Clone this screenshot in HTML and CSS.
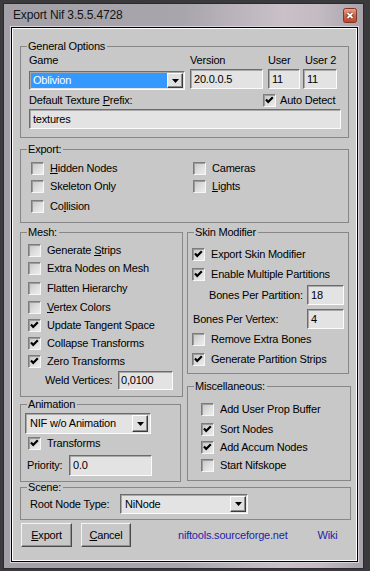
FILE: index.html
```html
<!DOCTYPE html>
<html>
<head>
<meta charset="utf-8">
<title>Export Nif</title>
<link rel="stylesheet" href="styles.css">
</head>
<body>
<div class="window">
  <div class="titlebar">
    <span class="title">Export Nif 3.5.5.4728</span>
    <span class="close">
      <svg width="14" height="15" viewBox="0 0 14 15">
        <defs>
          <linearGradient id="cg" x1="0" y1="0" x2="0" y2="1">
            <stop offset="0" stop-color="#eba590"/>
            <stop offset="0.5" stop-color="#d2644c"/>
            <stop offset="1" stop-color="#b9452f"/>
          </linearGradient>
        </defs>
        <rect x="0.5" y="0.5" width="13" height="14" rx="2" fill="url(#cg)" stroke="#84361f"/>
        <path d="M4.5 5 L9.5 10 M9.5 5 L4.5 10" stroke="#6a2a1c" stroke-width="3.2"/>
        <path d="M4.5 5 L9.5 10 M9.5 5 L4.5 10" stroke="#ffffff" stroke-width="1.8"/>
      </svg>
    </span>
  </div>

  <div class="client">
    <fieldset class="group general">
      <legend>General Options</legend>
      <div class="gbody">
        <div class="gen-grid">
          <span>Game</span>
          <span>Version</span>
          <span>User</span>
          <span class="u2">User 2</span>
          <div class="combo game">
            <span class="combo-text sel">Oblivion</span>
            <span class="combo-btn"><svg width="7" height="4" viewBox="0 0 7 4"><polygon points="0,0 7,0 3.5,4" fill="#000"/></svg></span>
          </div>
          <div class="field ver">20.0.0.5</div>
          <div class="field user">11</div>
          <div class="field user2">11</div>
        </div>
        <div class="gen-row2">
          <span>Default Texture <u>P</u>refix:</span>
          <label class="chk"><span class="box"><svg width="11" height="11" viewBox="0 0 11 11"><path class="tick" d="M2 4.6 L4.2 7 L8.8 2.2"/></svg></span><span>Auto Detect</span></label>
        </div>
        <div class="field prefix">textures</div>
      </div>
    </fieldset>

    <fieldset class="group export">
      <legend>Export:</legend>
      <div class="gbody">
        <label class="chk"><span class="box"></span><span><u>H</u>idden Nodes</span></label>
        <label class="chk"><span class="box"></span><span>Cameras</span></label>
        <label class="chk"><span class="box"></span><span>Skeleton Only</span></label>
        <label class="chk"><span class="box"></span><span><u>L</u>ights</span></label>
        <label class="chk mt2"><span class="box"></span><span>Co<u>l</u>lision</span></label>
      </div>
    </fieldset>

    <div class="cols">
      <div class="col col-left">
        <fieldset class="group mesh">
          <legend>Mesh:</legend>
          <div class="gbody">
            <label class="chk"><span class="box"></span><span>Generate <u>S</u>trips</span></label>
            <label class="chk"><span class="box"></span><span>Extra Nodes on Mesh</span></label>
            <label class="chk mt2"><span class="box"></span><span>Flatten Hierarchy</span></label>
            <label class="chk mt1"><span class="box"></span><span><u>V</u>ertex Colors</span></label>
            <label class="chk"><span class="box"><svg width="11" height="11" viewBox="0 0 11 11"><path class="tick" d="M2 4.6 L4.2 7 L8.8 2.2"/></svg></span><span>Update Tangent Space</span></label>
            <label class="chk"><span class="box"><svg width="11" height="11" viewBox="0 0 11 11"><path class="tick" d="M2 4.6 L4.2 7 L8.8 2.2"/></svg></span><span>Collapse Transforms</span></label>
            <label class="chk"><span class="box"><svg width="11" height="11" viewBox="0 0 11 11"><path class="tick" d="M2 4.6 L4.2 7 L8.8 2.2"/></svg></span><span>Zero Transforms</span></label>
            <div class="weld">
              <span class="weld-label">Weld Vertices:</span>
              <div class="field weld-in">0,0100</div>
            </div>
          </div>
        </fieldset>

        <fieldset class="group anim">
          <legend>Animation</legend>
          <div class="gbody">
            <div class="combo anim-combo">
              <span class="combo-text">NIF w/o Animation</span>
              <span class="combo-btn"><svg width="7" height="4" viewBox="0 0 7 4"><polygon points="0,0 7,0 3.5,4" fill="#000"/></svg></span>
            </div>
            <label class="chk transforms"><span class="box"><svg width="11" height="11" viewBox="0 0 11 11"><path class="tick" d="M2 4.6 L4.2 7 L8.8 2.2"/></svg></span><span>Transforms</span></label>
            <div class="prio">
              <span class="prio-label">Priority:</span>
              <div class="field prio-in">0.0</div>
            </div>
          </div>
        </fieldset>
      </div>

      <div class="col col-right">
        <fieldset class="group skin">
          <legend>Skin Modifier</legend>
          <div class="gbody">
            <label class="chk"><span class="box"><svg width="11" height="11" viewBox="0 0 11 11"><path class="tick" d="M2 4.6 L4.2 7 L8.8 2.2"/></svg></span><span>Export Skin Modifier</span></label>
            <label class="chk mt2"><span class="box"><svg width="11" height="11" viewBox="0 0 11 11"><path class="tick" d="M2 4.6 L4.2 7 L8.8 2.2"/></svg></span><span>Enable Multiple Partitions</span></label>
            <div class="numrow bpp">
              <span>Bones Per Partition:</span>
              <div class="field num">18</div>
            </div>
            <div class="numrow bpv">
              <span>Bones Per Vertex:</span>
              <div class="field num">4</div>
            </div>
            <label class="chk mt1"><span class="box"></span><span>Remove Extra Bones</span></label>
            <label class="chk mt2"><span class="box"><svg width="11" height="11" viewBox="0 0 11 11"><path class="tick" d="M2 4.6 L4.2 7 L8.8 2.2"/></svg></span><span>Generate Partition Strips</span></label>
          </div>
        </fieldset>

        <fieldset class="group misc">
          <legend>Miscellaneous:</legend>
          <div class="gbody">
            <label class="chk r1"><span class="box"></span><span>Add User Prop Buffer</span></label>
            <label class="chk r2"><span class="box"><svg width="11" height="11" viewBox="0 0 11 11"><path class="tick" d="M2 4.6 L4.2 7 L8.8 2.2"/></svg></span><span>Sort Nodes</span></label>
            <label class="chk r3"><span class="box"><svg width="11" height="11" viewBox="0 0 11 11"><path class="tick" d="M2 4.6 L4.2 7 L8.8 2.2"/></svg></span><span>Add Accum Nodes</span></label>
            <label class="chk r4"><span class="box"></span><span>Start Nifskope</span></label>
          </div>
        </fieldset>
      </div>
    </div>

    <fieldset class="group scene">
      <legend>Scene:</legend>
      <div class="gbody">
        <span class="scene-label">Root Node Type:</span>
        <div class="combo scene-combo">
          <span class="combo-text">NiNode</span>
          <span class="combo-btn"><svg width="7" height="4" viewBox="0 0 7 4"><polygon points="0,0 7,0 3.5,4" fill="#000"/></svg></span>
        </div>
      </div>
    </fieldset>

    <div class="buttons">
      <span class="btn btn-export"><u>E</u>xport</span>
      <span class="btn btn-cancel"><u>C</u>ancel</span>
      <span class="link site">niftools.sourceforge.net</span>
      <span class="link wiki">Wiki</span>
    </div>
  </div>
</div>
</body>
</html>
```

FILE: styles.css
```css
* { box-sizing: border-box; }

html, body { margin: 0; padding: 0; }

body {
  width: 370px;
  height: 571px;
  overflow: hidden;
  background: #3a3a3c;
  font-family: "Liberation Sans", Arial, sans-serif;
  font-size: 11px;
  line-height: 13px;
  letter-spacing: -0.2px;
  color: #000;
}

u { text-decoration: underline; text-underline-offset: 1px; }

/* window frame */
.window {
  margin: 3px 0 0 3px;
  width: 361px;
  height: 566px;
  border: 1px solid #2c2a2f;
  background: linear-gradient(90deg, #a3a1a7 0%, #a8a5ac 50%, #bdb5bd 66%, #cac1c8 78%, #c3bac2 88%, #a8a2ab 100%);
  padding: 0 5px 6px 7px;
  display: flex;
  flex-direction: column;
}

.titlebar {
  height: 23px;
  flex: none;
  display: flex;
  align-items: center;
  justify-content: space-between;
}

.title {
  padding-left: 2px;
  font-size: 12px;
  letter-spacing: -0.15px;
  color: #141414;
}

.close {
  align-self: flex-start;
  margin-top: 4px;
  margin-right: 1px;
  width: 14px;
  height: 15px;
  display: block;
}
.close svg { display: block; }

/* client area */
.client {
  flex: 1;
  border: 1px solid #000;
  background: #c8c8c8;
  box-shadow: inset 1px 1px 0 #ffffff, inset -1px -1px 0 #ffffff, 0 0 0 1px #d9d5db;
  padding: 12px 8px 0 8px;
  display: flex;
  flex-direction: column;
}

/* group boxes */
.group {
  margin: 0;
  padding: 0;
  min-width: 0;
  border: 1px solid #878787;
}
.group legend {
  margin-left: 6px;
  padding: 0 2px 0 1px;
  line-height: 13px;
  white-space: nowrap;
}

/* controls */
.chk {
  display: flex;
  align-items: center;
  height: 18px;
  white-space: nowrap;
}
.box {
  flex: none;
  width: 13px;
  height: 13px;
  margin-right: 6px;
  border: 1px solid;
  border-color: #7c7c7c #f6f6f6 #f6f6f6 #7c7c7c;
  box-shadow: inset 1px 1px 0 #9c9c9c;
  background: linear-gradient(135deg, #c4c4c4 0%, #dedede 55%, #ececec 100%);
  display: flex;
  align-items: center;
  justify-content: center;
}
.box svg { display: block; }
.tick { fill: none; stroke: #000; stroke-width: 2.2; }

.mt1 { margin-top: 1px; }
.mt2 { margin-top: 2px; }

.field {
  height: 20px;
  background: #e3e3e3;
  border: 1px solid;
  border-color: #6c6c6c #fbfbfb #fbfbfb #6c6c6c;
  box-shadow: inset 1px 1px 0 #a9a9a9;
  padding-left: 3px;
  display: flex;
  align-items: center;
  white-space: nowrap;
}

.combo {
  display: flex;
  background: #e3e3e3;
  border: 1px solid;
  border-color: #6c6c6c #fbfbfb #fbfbfb #6c6c6c;
  box-shadow: inset 1px 1px 0 #a9a9a9;
  padding: 1px;
}
.combo-text {
  flex: 1;
  display: flex;
  align-items: center;
  padding-left: 2px;
  white-space: nowrap;
}
.combo-text.sel {
  background: #3399ff;
  color: #fff;
}
.combo-btn {
  flex: none;
  width: 16px;
  border: 1px solid;
  border-color: #ffffff #3c3c3c #3c3c3c #ffffff;
  box-shadow: inset -1px -1px 0 #8c8c8c;
  background: #e0e0e0;
  display: flex;
  align-items: center;
  justify-content: center;
}
.combo-btn svg { display: block; }

/* general options */
.general .gbody { padding: 1px 8px 8px 8px; }
.gen-grid {
  display: grid;
  grid-template-columns: 161px 78px 35px 33px;
  grid-template-rows: 13px auto;
  row-gap: 2px;
  align-items: start;
  white-space: nowrap;
}
.u2 { padding-left: 2px; }
.game { width: 156px; height: 19px; margin-top: 2px; }
.ver { width: 73px; }
.user { width: 32px; }
.user2 { width: 34px; }
.gen-row2 {
  display: grid;
  grid-template-columns: 234px auto;
  align-items: center;
  height: 17px;
  margin-top: 1px;
  white-space: nowrap;
}
.gen-row2 .box { margin-right: 4px; }
.prefix { margin-top: 1px; width: 312px; }

/* export */
.export { margin-top: 5px; }
.export .gbody {
  padding: 3px 0 7px 10px;
  display: grid;
  grid-template-columns: 162px 1fr;
}

/* columns */
.cols {
  display: flex;
  gap: 4px;
  margin-top: 3px;
}
.col { display: flex; flex-direction: column; }
.col-left { width: 163px; }
.col-right { width: 162px; }

.mesh .gbody { padding: 2px 0 6px 7px; }
.weld {
  display: flex;
  align-items: center;
  height: 20px;
  padding-left: 17px;
  white-space: nowrap;
}
.weld-label { width: 73px; flex: none; }
.weld-in { width: 55px; height: 19px; padding-left: 2px; }

.anim { margin-top: 1px; margin-right: 2px; }
.anim .gbody { padding: 2px 0 5px 4px; }
.anim-combo { width: 126px; height: 21px; }
.anim-combo .combo-text { padding-left: 3px; }
.anim-combo .combo-btn { margin-right: 1px; }
.transforms { padding-left: 3px; }
.prio {
  display: flex;
  align-items: center;
  margin-top: 3px;
  padding-left: 2px;
}
.prio-label { width: 42px; flex: none; }
.prio-in { width: 83px; height: 21px; }

.skin .gbody { padding: 6px 4px 5px 4px; }
.numrow {
  display: flex;
  align-items: center;
  justify-content: space-between;
  height: 20px;
  white-space: nowrap;
}
.bpp { margin-top: 2px; padding-left: 17px; }
.bpv { margin-top: 4px; padding-left: 1px; }
.num { width: 37px; }

.misc { margin-top: 6px; margin-right: -2px; }
.misc .gbody {
  padding: 7px 0 6px 13px;
  display: grid;
  grid-template-rows: 19px 20px 17px 18px;
}
.misc .chk { height: auto; }

/* scene */
.scene { margin-top: -1px; margin-right: -2px; }
.scene .gbody {
  display: flex;
  align-items: center;
  padding: 0 0 5px 9px;
  white-space: nowrap;
}
.scene-label { width: 90px; flex: none; }
.scene-combo { width: 128px; height: 20px; }
.scene-combo .combo-text { padding-left: 3px; }

/* buttons */
.buttons {
  display: flex;
  align-items: center;
  height: 24px;
  margin-top: 3px;
}
.btn {
  height: 24px;
  display: flex;
  align-items: center;
  justify-content: center;
  background: #c8c8c8;
  border: 1px solid;
  border-color: #f4f4f4 #4a4a4a #4a4a4a #f4f4f4;
  box-shadow: inset -1px -1px 0 #929292;
}
.btn-export { width: 51px; margin-left: 1px; }
.btn-cancel { width: 50px; margin-left: 9px; }
.link { color: #1f1fa8; white-space: nowrap; }
.site { margin-left: 47px; }
.wiki { margin-left: 30px; }
```
